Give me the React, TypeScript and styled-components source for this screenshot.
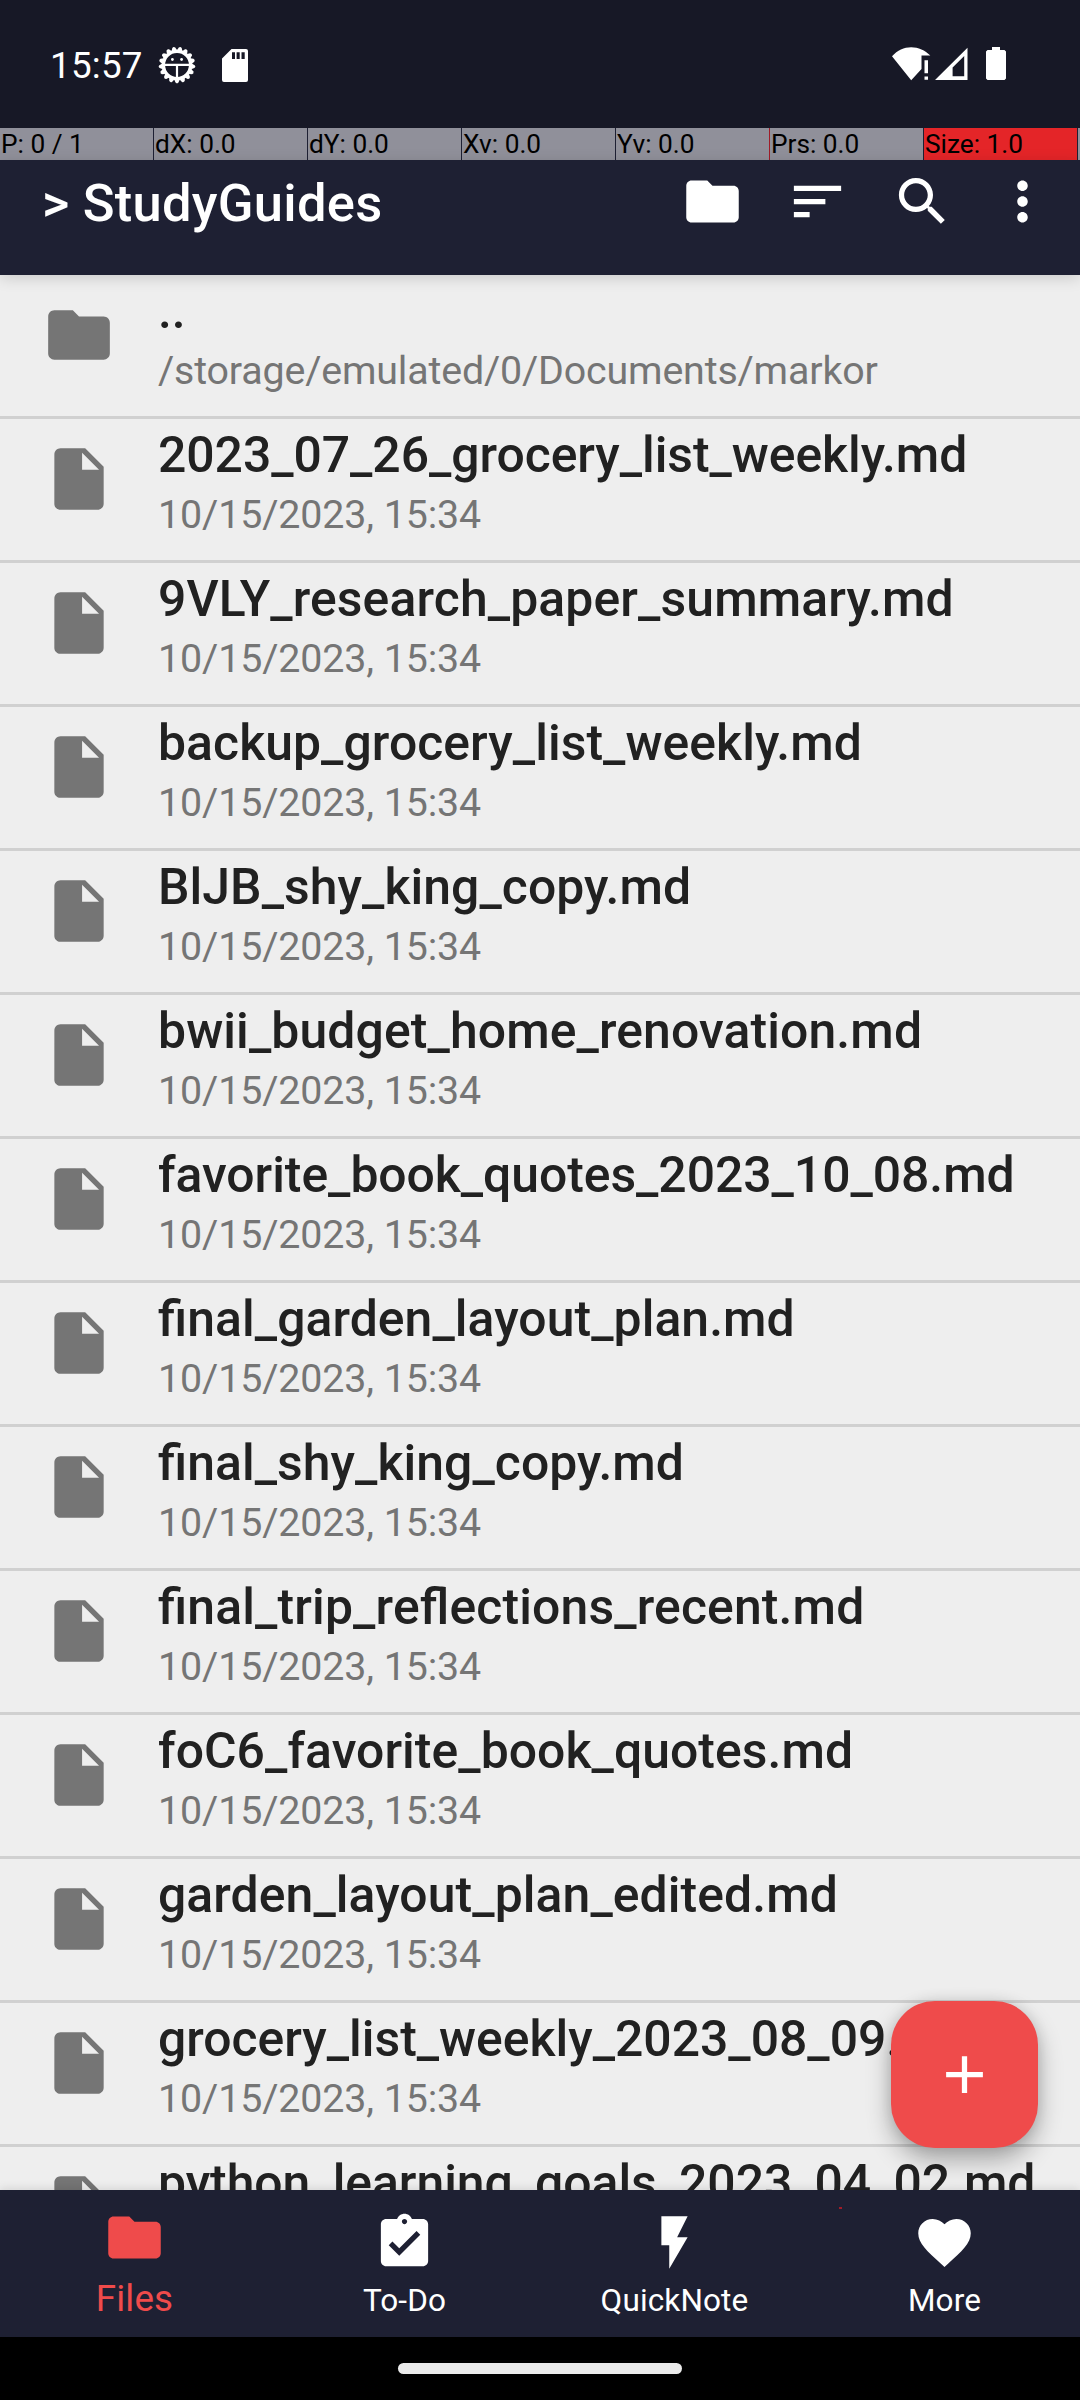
import React from "react";
import styled, { createGlobalStyle } from "styled-components";

const GlobalStyle = createGlobalStyle`
  * { box-sizing: border-box; }
  body { margin: 0; background: #000; font-family: Roboto, "Noto Sans", sans-serif; }
`;

const Screen = styled.div`
  width: 1080px;
  height: 2400px;
  display: flex;
  flex-direction: column;
  overflow: hidden;
  background: #eeeeee;
`;

const StatusBar = styled.header`
  height: 128px;
  flex: none;
  display: flex;
  justify-content: space-between;
  padding: 0 74px 0 50px;
  background: #171826;
  color: #fff;
`;

const StatusGroup = styled.div<{ $height: number }>`
  display: flex;
  align-items: center;
  height: ${(p) => p.$height}px;
`;

const Spacer = styled.span<{ $width: number }>`
  flex: none;
  width: ${(p) => p.$width}px;
`;

const Clock = styled.span`
  font-size: 36.75px;
  line-height: 44px;
  letter-spacing: 0.25px;
  padding-top: 2px;
  width: 108px;
`;

const Glyph = styled.svg`
  display: block;
  flex: none;
`;

const PointerBar = styled.div`
  height: 32px;
  flex: none;
  display: grid;
  grid-template-columns: repeat(7, 153px) 3px;
  column-gap: 1px;
  background: #1e2033;
`;

const PointerCell = styled.div<{ $alert?: boolean; $edge?: boolean }>`
  background: ${(p) => (p.$alert ? "#e42528" : "#90909a")};
  box-shadow: ${(p) => (p.$edge ? "1px 0 0 #a01c28" : "none")};
  color: #000;
  font-size: 26.25px;
  line-height: 32px;
  padding-left: 1px;
  white-space: nowrap;
`;

const Toolbar = styled.div`
  height: 115px;
  flex: none;
  display: flex;
  justify-content: space-between;
  padding: 0 11px 0 42px;
  background: #1e2033;
  color: #fff;
  position: relative;
  box-shadow: 0 3px 14px rgba(0, 0, 0, 0.15);
`;

const Title = styled.h1`
  margin: 12px 0 0;
  font-size: 52.5px;
  font-weight: 500;
  line-height: 62px;
  height: 62px;
  letter-spacing: 0.25px;
  white-space: nowrap;
`;

const Actions = styled.div`
  display: flex;
  padding-top: 9.5px;
`;

const Action = styled.button<{ $width: number }>`
  width: ${(p) => p.$width}px;
  height: 63px;
  padding: 0;
  border: 0;
  background: none;
  color: inherit;
  display: flex;
  justify-content: center;
`;

const List = styled.ul`
  flex: 1;
  min-height: 0;
  overflow: hidden;
  margin: 0;
  padding: 0;
  list-style: none;
`;

const Row = styled.li`
  height: 144px;
  display: flex;
  border-bottom: 3px solid #d0d0d0;
  color: #757575;
`;

const RowIcon = styled.div`
  width: 158px;
  padding: 23px 0 0 42px;
`;

const RowText = styled.div`
  flex: 1;
  min-width: 0;
  white-space: nowrap;
`;

const FileName = styled.div<{ $tracking: number }>`
  margin-top: 6px;
  font-size: 49.875px;
  font-weight: 500;
  line-height: 60px;
  letter-spacing: ${(p) => p.$tracking}px;
  font-feature-settings: "liga" 1;
  color: #212121;
`;

const FileInfo = styled.div<{ $tracking: number }>`
  font-size: 39.375px;
  line-height: 47px;
  letter-spacing: ${(p) => p.$tracking}px;
  margin-top: 6px;
`;

const BottomNav = styled.nav`
  height: 147px;
  flex: none;
  display: grid;
  grid-template-columns: repeat(4, 270px);
  background: #1e2033;
  position: relative;
  box-shadow: 0 -2px 8px rgba(0, 0, 0, 0.1);
`;

const NavItem = styled.button<{ $active?: boolean }>`
  border: 0;
  padding: ${(p) => (p.$active ? 16 : 21)}px 1px 0 0;
  background: none;
  font-family: inherit;
  display: flex;
  flex-direction: column;
  align-items: center;
  gap: ${(p) => (p.$active ? 7 : 8)}px;
  color: ${(p) => (p.$active ? "#ef4b4b" : "#fff")};
  font-size: ${(p) => (p.$active ? 36.75 : 31.5)}px;
  letter-spacing: 0.13px;
  line-height: ${(p) => (p.$active ? 45 : 37)}px;
`;

const TouchDot = styled.i`
  position: absolute;
  left: 839px;
  top: 17px;
  width: 3px;
  height: 2px;
  background: #a01c28;
`;

const Fab = styled.button`
  position: absolute;
  left: 891px;
  top: 2001px;
  width: 147px;
  height: 147px;
  border: 0;
  border-radius: 44px;
  padding: 0;
  background: #ef4b4b;
  color: #fff;
  display: flex;
  align-items: center;
  justify-content: center;
  box-shadow: 0 12px 24px rgba(0, 0, 0, 0.3), 0 0 14px rgba(0, 0, 0, 0.1);
`;

const GestureBar = styled.footer`
  height: 63px;
  flex: none;
  display: flex;
  align-items: center;
  justify-content: center;
  background: #000;
`;

const GesturePill = styled.div`
  width: 284px;
  height: 11px;
  border-radius: 5.5px;
  background: #ebebeb;
`;

const PATHS = {
  folder:
    "M10 4H4c-1.1 0-1.99.9-1.99 2L2 18c0 1.1.9 2 2 2h16c1.1 0 2-.9 2-2V8c0-1.1-.9-2-2-2h-8l-2-2z",
  file: "M14 2H6c-1.1 0-1.99.9-1.99 2L4 20c0 1.1.89 2 1.99 2H18c1.1 0 2-.9 2-2V8l-6-6zM13 9V3.5L18.5 9H13z",
  sort: "M3 18h6v-2H3v2zM3 6v2h18V6H3zm0 7h12v-2H3v2z",
  search:
    "M15.5 14h-.79l-.28-.27C15.41 12.59 16 11.11 16 9.5 16 5.91 13.09 3 9.5 3S3 5.91 3 9.5 5.91 16 9.5 16c1.61 0 3.09-.59 4.23-1.57l.27.28v.79l5 4.99L20.49 19l-4.99-5zm-6 0C7.01 14 5 11.99 5 9.5S7.01 5 9.5 5 14 7.01 14 9.5 11.99 14 9.5 14z",
  more: "M12 8c1.1 0 2-.9 2-2s-.9-2-2-2-2 .9-2 2 .9 2 2 2zm0 2c-1.1 0-2 .9-2 2s.9 2 2 2 2-.9 2-2-.9-2-2-2zm0 6c-1.1 0-2 .9-2 2s.9 2 2 2 2-.9 2-2-.9-2-2-2z",
  todo: "M19 3h-4.18C14.4 1.84 13.3 1 12 1c-1.3 0-2.4.84-2.82 2H5c-1.1 0-2 .9-2 2v14c0 1.1.9 2 2 2h14c1.1 0 2-.9 2-2V5c0-1.1-.9-2-2-2zm-7 0c.55 0 1 .45 1 1s-.45 1-1 1-1-.45-1-1 .45-1 1-1zm-2 14l-4-4 1.41-1.41L10 14.17l6.59-6.59L18 9l-8 8z",
  flash: "M7 2v11h3v9l7-12h-4l4-8z",
  heart:
    "M12 21.35l-1.45-1.32C5.4 15.36 2 12.28 2 8.5 2 5.42 4.42 3 7.5 3c1.74 0 3.41.81 4.5 2.09C13.09 3.81 14.76 3 16.5 3 19.58 3 22 5.42 22 8.5c0 3.78-3.4 6.86-8.55 11.54L12 21.35z",
  add: "M19 13h-6v6h-2v-6H5v-2h6V5h2v6h6v2z",
};

type IconName = keyof typeof PATHS;

const Icon = ({ name, size }: { name: IconName; size: number }) => (
  <Glyph width={size} height={size} viewBox="0 0 24 24" fill="currentColor">
    <path d={PATHS[name]} />
  </Glyph>
);

const TEETH = 17;
const teeth = Array.from({ length: TEETH }, (_, i) => 180 + (i * 360) / TEETH);

const GearFace = () => (
  <Glyph width={38} height={38} viewBox="-19 -19 38 38" fill="none" stroke="#fff">
    <circle r={13.6} strokeWidth={3.4} />
    {teeth.map((a) => (
      <path
        key={a}
        d="M-2.8 -14.5 L-1.5 -17.6 Q0 -19.2 1.5 -17.6 L2.8 -14.5 Z"
        fill="#fff"
        stroke="none"
        transform={`rotate(${a})`}
      />
    ))}
    <path d="M-13 -0.2H13M0 0V13" strokeWidth={2.2} />
    <circle cx={-4.6} cy={-5.5} r={1.4} fill="#fff" stroke="none" />
    <circle cx={4.6} cy={-5.5} r={1.4} fill="#fff" stroke="none" />
  </Glyph>
);

const SdCard = () => (
  <Glyph width={26} height={33} viewBox="0 0 26 33">
    <path
      fillRule="evenodd"
      fill="#fff"
      d="M9.5 0H24a2 2 0 0 1 2 2V31a2 2 0 0 1-2 2H2a2 2 0 0 1-2-2V9.5ZM10 3.2V10H13V3.2ZM14.6 3.2V10H17.7V3.2ZM19.5 3.2V10H22.7V3.2Z"
    />
  </Glyph>
);

const WifiAlert = () => (
  <Glyph width={40} height={34} viewBox="0 0 40 34" fill="#fff">
    <path d="M0 9.2C5.5 3.2 12 .2 19.2 .2S33 3.2 38.3 8.5H29.5V22L19.2 33.3Z" />
    <path d="M32.5 13.3H36V26.3H32.5ZM32.5 29.5H36V32.7H32.5Z" />
  </Glyph>
);

const Signal = () => (
  <Glyph width={33} height={34} viewBox="0 0 33 34">
    <path fillRule="evenodd" fill="#fff" d="M32.5 .8V33H0ZM29.2 9L17.6 20.5V29.3H29.2Z" />
  </Glyph>
);

const Battery = () => (
  <Glyph width={20} height={34} viewBox="0 0 20 34">
    <path fill="#fff" d="M6 0H14V3H18.5L20 4.5V31.5L18.5 33H1.5L0 31.5V4.5L1.5 3H6Z" />
  </Glyph>
);

const pointerCells = [
  { label: "P: 0 / 1" },
  { label: "dX: 0.0" },
  { label: "dY: 0.0" },
  { label: "Xv: 0.0" },
  { label: "Yv: 0.0", edge: true },
  { label: "Prs: 0.0" },
  { label: "Size: 1.0", alert: true },
  { label: "" },
];

const STAMP = "10/15/2023, 15:34";

const entries: { icon: IconName; name: string; info?: string; tracking?: number }[] = [
  { icon: "folder", name: "..", info: "/storage/emulated/0/Documents/markor" },
  { icon: "file", name: "2023_07_26_grocery_list_weekly.md", tracking: -0.04 },
  { icon: "file", name: "9VLY_research_paper_summary.md", tracking: 0.13 },
  { icon: "file", name: "backup_grocery_list_weekly.md", tracking: 0.07 },
  { icon: "file", name: "BlJB_shy_king_copy.md", tracking: 0.07 },
  { icon: "file", name: "bwii_budget_home_renovation.md", tracking: 0.12 },
  { icon: "file", name: "favorite_book_quotes_2023_10_08.md", tracking: -0.04 },
  { icon: "file", name: "final_garden_layout_plan.md", tracking: 0.07 },
  { icon: "file", name: "final_shy_king_copy.md", tracking: 0.06 },
  { icon: "file", name: "final_trip_reflections_recent.md", tracking: 0.15 },
  { icon: "file", name: "foC6_favorite_book_quotes.md", tracking: 0.06 },
  { icon: "file", name: "garden_layout_plan_edited.md", tracking: 0.09 },
  { icon: "file", name: "grocery_list_weekly_2023_08_09.md" },
  { icon: "file", name: "python_learning_goals_2023_04_02.md", tracking: -0.03 },
];

const tabs: { icon: IconName; label: string; active?: boolean }[] = [
  { icon: "folder", label: "Files", active: true },
  { icon: "todo", label: "To-Do" },
  { icon: "flash", label: "QuickNote" },
  { icon: "heart", label: "More" },
];

export default function App() {
  return (
    <Screen>
      <GlobalStyle />
      <StatusBar>
        <StatusGroup $height={130}>
          <Clock>15:57</Clock>
          <GearFace />
          <Spacer $width={26} />
          <SdCard />
        </StatusGroup>
        <StatusGroup $height={128}>
          <WifiAlert />
          <Spacer $width={2.5} />
          <Signal />
          <Spacer $width={18.5} />
          <Battery />
        </StatusGroup>
      </StatusBar>
      <PointerBar>
        {pointerCells.map((c, i) => (
          <PointerCell key={i} $alert={c.alert} $edge={c.edge}>
            {c.label}
          </PointerCell>
        ))}
      </PointerBar>
      <Toolbar>
        <Title>&gt; StudyGuides</Title>
        <Actions>
          <Action $width={105}><Icon name="folder" size={63} /></Action>
          <Action $width={105}><Icon name="sort" size={63} /></Action>
          <Action $width={105}><Icon name="search" size={63} /></Action>
          <Action $width={94}><Icon name="more" size={63} /></Action>
        </Actions>
      </Toolbar>
      <List>
        {entries.map((e) => (
          <Row key={e.name}>
            <RowIcon>
              <Icon name={e.icon} size={74} />
            </RowIcon>
            <RowText>
              <FileName $tracking={e.tracking ?? 0}>{e.name}</FileName>
              <FileInfo $tracking={e.info ? -0.16 : -0.11}>{e.info ?? STAMP}</FileInfo>
            </RowText>
          </Row>
        ))}
      </List>
      <BottomNav>
        {tabs.map((t) => (
          <NavItem key={t.label} $active={t.active}>
            <Icon name={t.icon} size={63} />
            {t.label}
          </NavItem>
        ))}
        <TouchDot />
      </BottomNav>
      <GestureBar>
        <GesturePill />
      </GestureBar>
      <Fab>
        <Icon name="add" size={63} />
      </Fab>
    </Screen>
  );
}
